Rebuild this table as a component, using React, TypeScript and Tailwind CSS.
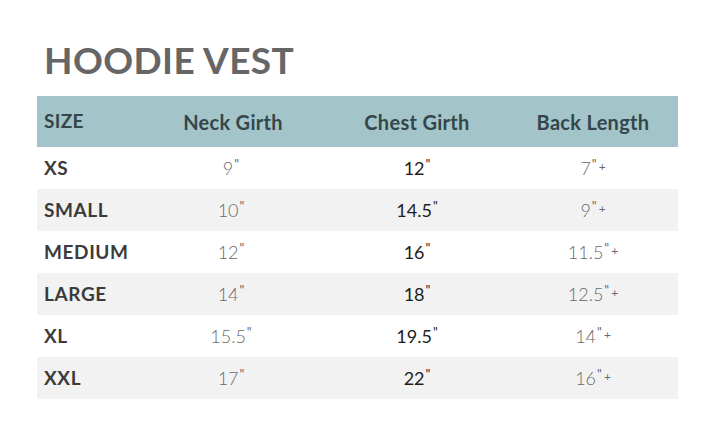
import React from "react";

const rows = [
  { size: "XS", neck: "9", chest: "12", back: "7" },
  { size: "SMALL", neck: "10", chest: "14.5", back: "9" },
  { size: "MEDIUM", neck: "12", chest: "16", back: "11.5" },
  { size: "LARGE", neck: "14", chest: "18", back: "12.5" },
  { size: "XL", neck: "15.5", chest: "19.5", back: "14" },
  { size: "XXL", neck: "17", chest: "22", back: "16" },
];

function Q() {
  return <span className="relative top-[-6px] text-[13px] ml-[1px] font-normal">"</span>;
}
function P() {
  return <span className="relative top-[-4px] text-[12px] ml-[2px] font-normal">+</span>;
}

export default function App() {
  return (
    <div className="w-[710px] h-[448px] bg-white" style={{ fontFamily: "Lato, 'Open Sans', sans-serif" }}>
      <div className="pt-[39px] pl-[44px] h-[96px]">
        <h1 className="text-[37px] leading-[42px] font-bold text-[#666666] tracking-[0.4px]">HOODIE VEST</h1>
      </div>
      <div className="ml-[37px] w-[641px]">
        <div className="grid grid-cols-[103px_186px_182px_170px] h-[51px] items-center bg-[#a3c5c9] text-[#34464c] font-bold">
          <div className="pl-[7px] text-[19px] tracking-[0.3px]">SIZE</div>
          <div className="text-center text-[20px] tracking-[0.3px]">Neck Girth</div>
          <div className="text-center text-[20px] tracking-[0.3px]">Chest Girth</div>
          <div className="text-center text-[20px] tracking-[0.3px]">Back Length</div>
        </div>
        {rows.map((r, i) => (
          <div
            key={r.size}
            className={`grid grid-cols-[103px_186px_182px_170px] h-[42px] items-center ${i % 2 === 1 ? "bg-[#f2f2f2]" : "bg-white"}`}
          >
            <div className="pl-[7px] text-[19px] font-bold text-[#3b3b3b] tracking-[0.6px]">{r.size}</div>
            <div className="text-center text-[18px] font-light text-[#6a6a6a] pr-[4px]">
              {r.neck}
              <Q />
            </div>
            <div className="text-center text-[18px] font-normal text-[#1e1e1e]">
              {r.chest}
              <Q />
            </div>
            <div className="text-center text-[18px] font-light text-[#6a6a6a]">
              {r.back}
              <Q />
              <P />
            </div>
          </div>
        ))}
      </div>
    </div>
  );
}
